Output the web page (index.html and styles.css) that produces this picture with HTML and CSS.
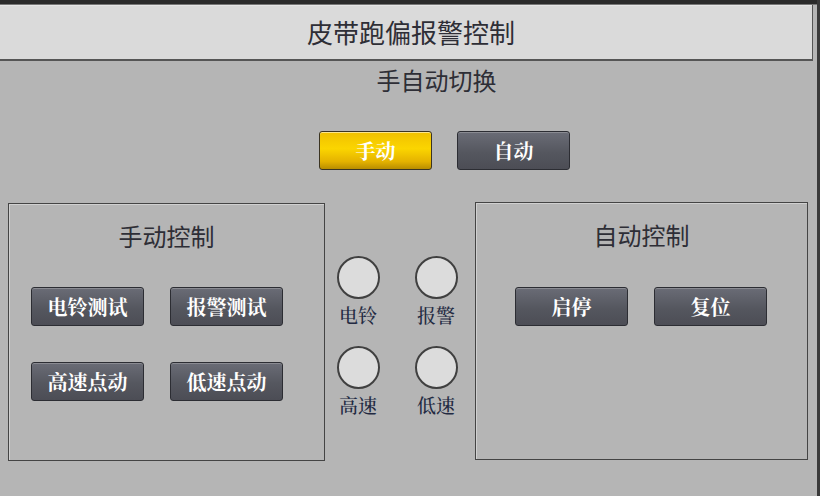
FILE: index.html
```html
<!DOCTYPE html>
<html lang="zh-CN">
<head>
  <meta charset="UTF-8">
  <meta name="viewport" content="width=device-width, initial-scale=1.0">
  <title>皮带跑偏报警控制</title>
  <link rel="stylesheet" href="styles.css">
</head>
<body>
  <div class="top-strip"></div>
  <div class="header">
    <h1>皮带跑偏报警控制</h1>
  </div>

  <div class="mode">
    <div class="mode-title">手自动切换</div>
    <div class="mode-buttons">
      <button class="btn btn-active">手动</button>
      <button class="btn">自动</button>
    </div>
  </div>

  <div class="main">
    <div class="panel panel-left">
      <h2>手动控制</h2>
      <div class="btn-grid">
        <button class="btn">电铃测试</button>
        <button class="btn">报警测试</button>
        <button class="btn">高速点动</button>
        <button class="btn">低速点动</button>
      </div>
    </div>

    <div class="lamps">
      <div class="lamp"><span class="light"></span><span class="lamp-label">电铃</span></div>
      <div class="lamp"><span class="light"></span><span class="lamp-label">报警</span></div>
      <div class="lamp"><span class="light"></span><span class="lamp-label">高速</span></div>
      <div class="lamp"><span class="light"></span><span class="lamp-label">低速</span></div>
    </div>

    <div class="panel panel-right">
      <h2>自动控制</h2>
      <div class="btn-grid">
        <button class="btn">启停</button>
        <button class="btn">复位</button>
      </div>
    </div>
  </div>
</body>
</html>
```

FILE: styles.css
```css
body {
  margin: 0;
  padding: 0;
  background: #b5b5b5;
  font-family: 'Noto Sans CJK SC', sans-serif;
  color: #2e2e36;
  width: 820px;
  height: 496px;
  overflow: hidden;
  border-right: 3px solid #3a3a3a;
  box-sizing: border-box;
}

.top-strip {
  height: 4px;
  background: #2b2b2b;
  border-bottom: 1px solid #777;
}

.header {
  height: 54px;
  margin-right: 4px;
  background: #dadada;
  border-right: 1px solid #555;
  border-bottom: 2px solid #555;
  box-shadow: 0 1px 0 #e6e6e6 inset;
}

.header h1 {
  margin: 0;
  font-size: 26px;
  font-weight: normal;
  line-height: 54px;
  text-align: center;
  padding-left: 10px;
}

.mode {
  margin-left: 303px;
  width: 283px;
}

.mode-title {
  font-size: 24px;
  line-height: 30px;
  text-align: center;
  padding-top: 4px;
  margin-left: -16px;
}

.mode-buttons {
  display: flex;
  gap: 25px;
  margin-top: 36px;
  margin-left: 16px;
}

.btn {
  width: 113px;
  height: 39px;
  padding: 0;
  border: 1px solid #2c2d33;
  border-radius: 3px;
  background: linear-gradient(to bottom, #6a6c76, #55575f 55%, #4c4d55);
  color: #fff;
  font-family: 'Noto Serif CJK SC', 'Noto Sans CJK SC', serif;
  font-size: 20px;
  font-weight: bold;
  box-shadow: 0 1px 0 #8a8b92 inset;
  cursor: pointer;
}

.btn-active {
  background: linear-gradient(to bottom, #f0c000, #fbd500 45%, #e4b200 80%, #b88d00);
  border-color: #3b3422;
  box-shadow: 0 1px 0 #fde68a inset;
}

.main {
  display: flex;
  margin-top: 33px;
  padding-left: 8px;
}

.panel {
  height: 258px;
  border: 1px solid #444;
  box-sizing: border-box;
  box-shadow: 1px 1px 0 #d0d0d0 inset;
}

.panel h2 {
  margin: 0;
  padding-top: 17px;
  font-size: 24px;
  font-weight: normal;
  line-height: 30px;
  text-align: center;
}

.panel-left {
  width: 317px;
}

.panel-right {
  width: 333px;
  margin-top: -1px;
}

.btn-grid {
  display: grid;
  grid-template-columns: 113px 113px;
  column-gap: 26px;
  row-gap: 36px;
  margin-top: 36px;
}

.panel-left .btn-grid {
  padding-left: 22px;
  padding-right: 2px;
}

.panel-right .btn-grid {
  padding-left: 39px;
  margin-top: 37px;
}

.lamps {
  width: 150px;
  display: grid;
  grid-template-columns: 60px 60px;
  column-gap: 18px;
  row-gap: 20px;
  align-content: start;
  padding-top: 53px;
  padding-left: 3px;
  box-sizing: border-box;
}

.lamp {
  display: flex;
  flex-direction: column;
  align-items: center;
}

.light {
  width: 43px;
  height: 43px;
  border-radius: 50%;
  border: 2px solid #404040;
  background: #dcdcdc;
  box-sizing: border-box;
}

.lamp-label {
  margin-top: 5px;
  font-family: 'Noto Serif CJK SC', 'Noto Sans CJK SC', serif;
  font-size: 19px;
  font-weight: 500;
  line-height: 22px;
  color: #232a42;
}
```
